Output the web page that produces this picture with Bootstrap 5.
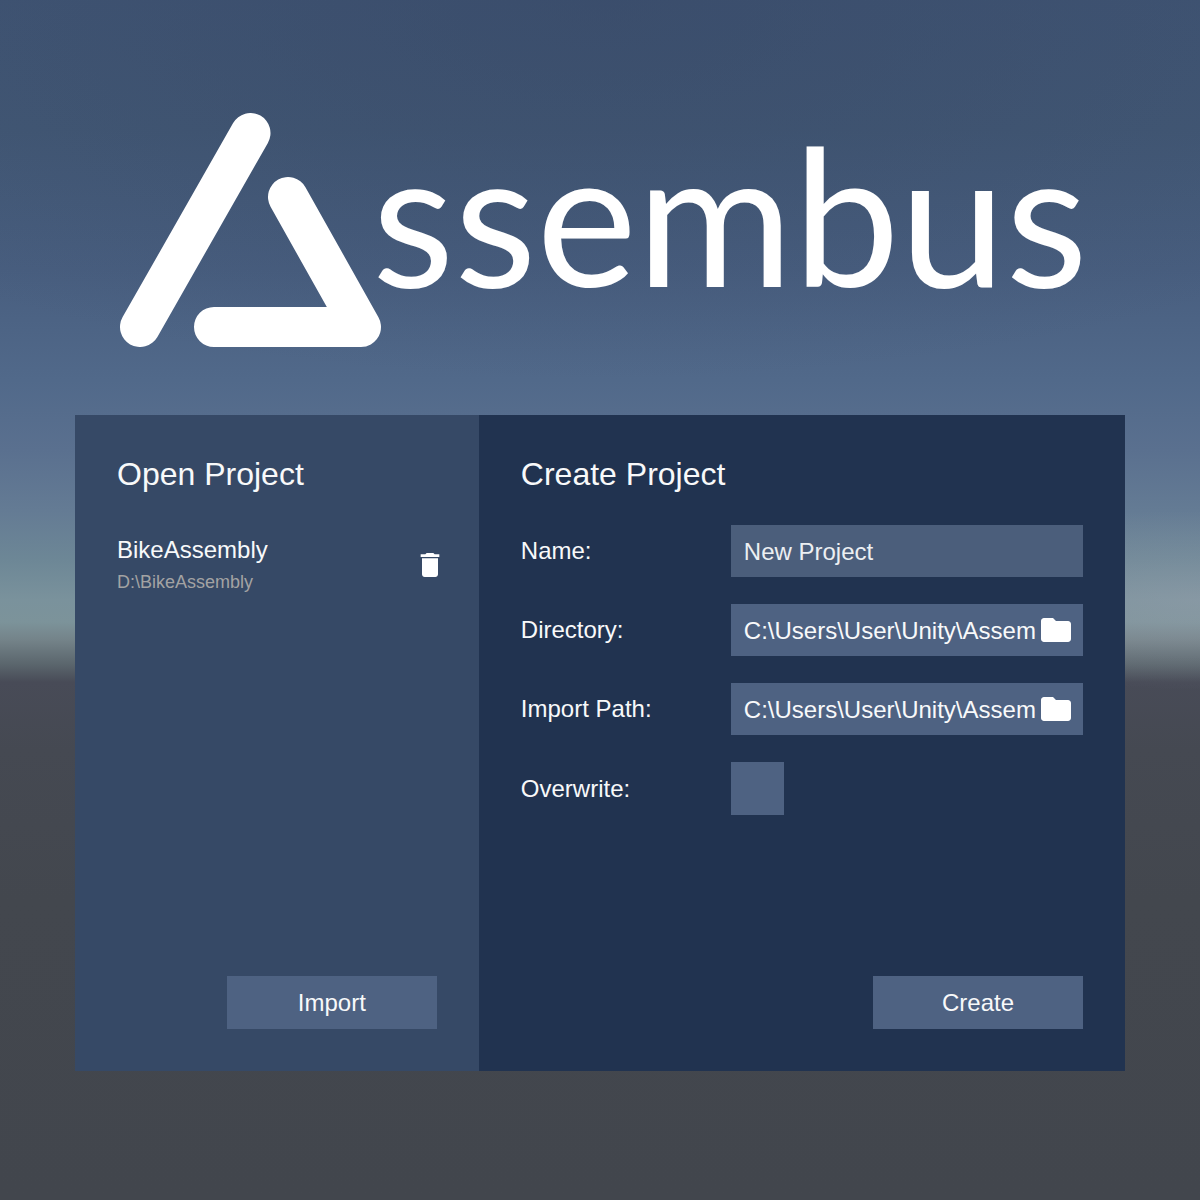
<!DOCTYPE html>
<html lang="en">
<head>
<meta charset="utf-8">
<meta name="viewport" content="width=device-width, initial-scale=1">
<title>Assembus</title>
<link href="https://cdn.jsdelivr.net/npm/bootstrap@5.3.0/dist/css/bootstrap.min.css" rel="stylesheet">
<style>
  body {
    font-family: "Liberation Sans", Arial, sans-serif;
    font-size: 24px;
    line-height: 32px;
    color: #f8f9fa;
    /* sky, haze at the horizon, ground */
    background:
      radial-gradient(ellipse 300px 90px at 100% 600px, rgba(160, 164, 178, .35), transparent),
      radial-gradient(ellipse 1000px 380px at 50% 0, rgba(52, 68, 98, .45), transparent),
      linear-gradient(180deg, #405574 0, #425875 130px, #485e7f 270px, #51698a 380px, #5a708f 450px, #647b94 510px, #6d8796 560px, #7a929c 600px, #7c939a 622px, #748389 640px, #5a656c 665px, #484b57 682px, #454952 750px, #43474e 900px, #42464d 100%);
    min-height: 100vh;
  }
  .page { padding: 0 75px 129px; }
  .brand { padding: 113px 0 68px 45px; }
  .brand svg { flex: none; width: 262px; height: 234px; }
  .wordmark { font-family: Lato, sans-serif; font-size: 190px; line-height: 200px; font-weight: 400; color: #fff; margin-left: -10px; }
  .launcher { min-height: 656px; grid-template-columns: 5fr 8fr; }
  .pane { padding: 42px; min-width: 0; }
  .pane-open { background: #364966; }
  .pane-create { background: #213350; }
  .pane h2 { font-size: 32px; line-height: 34px; font-weight: 400; margin-bottom: 34px; }
  .project { color: inherit; padding-top: 9px; }
  .project-path { font-size: 18px; line-height: 24px; color: #a3a3a3; margin-top: 4px; }
  .icon-btn { border: 0; background: none; color: #fff; padding: 0; display: flex; }
  .icon-delete { margin-right: -9px; }
  .rows { gap: 27px; }
  .form-label-cell { width: 210px; flex: none; }
  .field { background: #4e6282; height: 52px; padding-right: 9px; min-width: 0; }
  .field .form-control {
    font-size: 24px; line-height: 32px; color: #f8f9fa; background: transparent;
    border: 0; border-radius: 0; box-shadow: none; padding: 1px 0 0 13px; height: 52px; min-width: 0;
  }
  .field-name { background: #4b5e7b; }
  .field-name .form-control { color: #eceff2; }
  .form-check-input.tick { width: 53px; height: 53px; margin: 0; border: 0; border-radius: 0; background-color: #4e6282; }
  .action { width: 210px; height: 53px; border: 0; border-radius: 0; background: #4e6282; color: #f8f9fa; font-size: 24px; line-height: 32px; padding: 0; }
</style>
<script src="https://cdn.jsdelivr.net/npm/bootstrap@5.3.0/dist/js/bootstrap.bundle.min.js"></script>
</head>
<body>
<div class="page">
  <h1 class="brand d-flex align-items-start m-0">
    <svg viewBox="0 0 262 234" role="img" aria-label="A" fill="none" stroke="#fff" stroke-width="40" stroke-linecap="round" stroke-linejoin="round">
      <path d="M130.500 20L20 214"/>
      <path d="M168 84L241 214H94"/>
    </svg>
    <span class="wordmark">ssembus</span>
  </h1>

  <main class="launcher d-grid">
    <section class="pane pane-open d-flex flex-column">
      <h2>Open Project</h2>
      <div class="d-flex justify-content-between align-items-start">
        <a href="#" class="project text-decoration-none d-block">
          <span class="d-block">BikeAssembly</span>
          <span class="project-path d-block">D:\BikeAssembly</span>
        </a>
        <button type="button" class="icon-btn icon-delete mt-4" aria-label="Delete project">
          <svg width="32" height="32" viewBox="0 0 24 24" fill="currentColor"><path d="M6 19c0 1.100.9 2 2 2h8c1.100 0 2-.9 2-2V7H6v12zM19 4h-3.500l-1-1h-5l-1 1H5v2h14V4z"/></svg>
        </button>
      </div>
      <button type="button" class="btn action mt-auto align-self-end">Import</button>
    </section>

    <section class="pane pane-create">
      <form class="d-flex flex-column h-100">
        <h2>Create Project</h2>
        <div class="rows d-flex flex-column">
          <div class="d-flex align-items-center">
            <label class="form-label-cell" for="name">Name:</label>
            <div class="field field-name flex-fill"><input class="form-control" id="name" type="text" value="New Project"></div>
          </div>
          <div class="d-flex align-items-center">
            <label class="form-label-cell" for="dir">Directory:</label>
            <div class="field flex-fill d-flex align-items-center">
              <input class="form-control" id="dir" type="text" value="C:\Users\User\Unity\Assem">
              <button type="button" class="icon-btn" aria-label="Browse directory">
                <svg width="36" height="36" viewBox="0 0 24 24" fill="currentColor"><path d="M10 4H4c-1.100 0-2 .9-2 2v12c0 1.100.9 2 2 2h16c1.100 0 2-.9 2-2V8c0-1.100-.9-2-2-2h-8l-2-2z"/></svg>
              </button>
            </div>
          </div>
          <div class="d-flex align-items-center">
            <label class="form-label-cell" for="path">Import Path:</label>
            <div class="field flex-fill d-flex align-items-center">
              <input class="form-control" id="path" type="text" value="C:\Users\User\Unity\Assem">
              <button type="button" class="icon-btn" aria-label="Browse import path">
                <svg width="36" height="36" viewBox="0 0 24 24" fill="currentColor"><path d="M10 4H4c-1.100 0-2 .9-2 2v12c0 1.100.9 2 2 2h16c1.100 0 2-.9 2-2V8c0-1.100-.9-2-2-2h-8l-2-2z"/></svg>
              </button>
            </div>
          </div>
          <div class="d-flex align-items-center">
            <label class="form-label-cell" for="overwrite">Overwrite:</label>
            <input class="form-check-input tick" id="overwrite" type="checkbox">
          </div>
        </div>
        <button type="button" class="btn action mt-auto align-self-end">Create</button>
      </form>
    </section>
  </main>
</div>
</body>
</html>
